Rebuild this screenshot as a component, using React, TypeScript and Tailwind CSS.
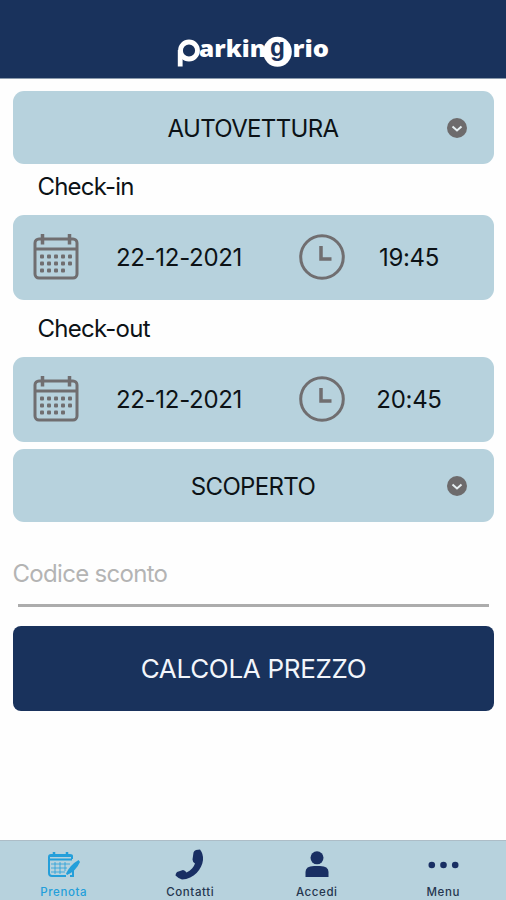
import type { ReactNode } from "react";

function Logo() {
  return (
    <svg
      width="156"
      height="38"
      viewBox="0 0 156 38"
      fill="#fff"
      fontFamily="'Open Sans', sans-serif"
      fontWeight="800"
      fontSize="22.500"
    >
      <path d="M5.200 17V33.500" stroke="#fff" strokeWidth="4.800" />
      <circle cx="14" cy="17.500" r="8.500" fill="none" stroke="#fff" strokeWidth="4.800" />
      <text x="24" y="24" textLength="67" lengthAdjust="spacingAndGlyphs">
        arkin
      </text>
      <ellipse cx="102.500" cy="18.800" rx="14.300" ry="15" />
      <text x="95" y="23" fill="#19325c" fontFamily="'Liberation Sans', sans-serif" fontWeight="700" fontSize="25" textLength="15" lengthAdjust="spacingAndGlyphs">
        g
      </text>
      <text x="117.500" y="24" textLength="36.500" lengthAdjust="spacingAndGlyphs">
        rio
      </text>
    </svg>
  );
}

function ChevronBadge() {
  return (
    <svg width="20" height="20" viewBox="0 0 20 20" fill="none">
      <circle cx="10" cy="10" r="10" fill="#6d6b6c" />
      <path d="M5.500 8.500L10 12.500L14.500 8.500" stroke="#e6eff2" strokeWidth="2" />
    </svg>
  );
}

function CalendarIcon() {
  const dots = [
    [8, 22], [15, 22], [22, 22], [29, 22], [36, 22],
    [8, 29], [15, 29], [22, 29], [29, 29], [36, 29],
    [8, 36], [15, 36], [22, 36], [29, 36],
  ];
  return (
    <svg width="46" height="46" viewBox="0 0 46 46" fill="none" stroke="#706e70" strokeWidth="3">
      <rect x="2" y="5" width="42" height="39" rx="4" />
      <path d="M2 15H44" />
      <path d="M9.500 0V10.500M36.500 0V10.500" strokeWidth="3.500" />
      {dots.map(([x, y]) => (
        <rect key={`${x}-${y}`} x={x - 1} y={y - 1.5} width="4" height="4" rx="1" fill="#706e70" stroke="none" />
      ))}
    </svg>
  );
}

function ClockIcon() {
  return (
    <svg width="46" height="46" viewBox="0 0 46 46" fill="none" stroke="#706e70" strokeWidth="3">
      <circle cx="23" cy="23" r="21.300" />
      <path d="M22 12V25H32.500" strokeWidth="3.500" />
    </svg>
  );
}

function BookIcon() {
  return (
    <svg width="32" height="26" viewBox="0 0 32 26" fill="none" stroke="#249fda" strokeWidth="2">
      <path d="M24 7V4Q24 3 22 3H3Q1 3 1 5V21Q1 24 4 24H18" />
      <path d="M1 7.500H24M2 4H23" strokeWidth="2" />
      <path d="M6 0V5M19 0V5" strokeWidth="2.500" />
      <path d="M3 12H22M3 16H19M3 20H17M7 10V22M12 10V22M17 10V19" strokeWidth=".8" />
      <path d="M22 24H25V18" />
      <path d="M30.500 8L32 10Q28 19 19 23L18 21.500Q22 13 30.500 8Z" fill="#249fda" stroke="none" />
    </svg>
  );
}

function PhoneIcon() {
  return (
    <svg width="30" height="31" viewBox="0 0 30 31" fill="#192f63">
      <path d="M21 1L25 0.500Q28.500 5 28 11C27 20 19 30 7 30.500Q4 30 .5 26.500Q.5 24.500 2 23L8 21Q10 21 11.500 23.500C16 21.500 19 18 20 14.500Q17.500 13 17.500 10.500L18.500 3.500Q19 1.500 21 1Z" />
    </svg>
  );
}

function UserIcon() {
  return (
    <svg width="24" height="27" viewBox="0 0 24 27" fill="#192f63">
      <circle cx="12" cy="6.800" r="6.500" />
      <path d="M.5 26V21Q.5 15 9 15H15Q23.500 15 23.500 21V26Z" />
    </svg>
  );
}

function DotsIcon() {
  return (
    <svg width="31" height="8" viewBox="0 0 31 8" fill="#192f63">
      <circle cx="3.800" cy="4" r="3.300" />
      <circle cx="15.500" cy="4" r="3.300" />
      <circle cx="27.200" cy="4" r="3.300" />
    </svg>
  );
}

function Select({ children }: { children: ReactNode }) {
  return (
    <button type="button" className="grid h-[73px] w-full grid-cols-[54px_1fr_54px] items-center rounded-[11px] bg-[#b7d2dd] pr-[1px]">
      <span className="col-start-2 pt-[2px] pl-[1px] tracking-[-0.65px]">{children}</span>
      <span className="pl-[8px]">
        <ChevronBadge />
      </span>
    </button>
  );
}

function DateTimeRow({ date, time }: { date: string; time: string }) {
  return (
    <div className="flex h-[85px] items-center rounded-[11px] bg-[#b7d2dd] pl-[20px]">
      <span className="pb-[1px]">
        <CalendarIcon />
      </span>
      <span className="w-[200px] pt-[1px] pl-[1px] text-center tracking-[-0.3px]">{date}</span>
      <span className="ml-[20px] pb-[1px]">
        <ClockIcon />
      </span>
      <span className="w-[129px] pt-[1px] text-center tracking-[-0.3px]">{time}</span>
    </div>
  );
}

function Tab({ label, active, children }: { label: string; active?: boolean; children: ReactNode }) {
  return (
    <button type="button" className="flex flex-col items-center pt-[7px] pl-[1px]">
      <span className="flex h-[33px] items-center justify-center">{children}</span>
      <span className={`mt-[4px] text-[11.5px] leading-[14px] font-medium tracking-[0.6px] ${active ? "text-[#249fda]" : "text-[#25364f]"}`}>
        {label}
      </span>
    </button>
  );
}

export default function App() {
  return (
    <div className="flex h-[900px] w-[506px] flex-col bg-[#fefefe] font-['Inter',sans-serif] text-[24px] leading-[30px] text-[#0c1216]">
      <header className="flex h-[79px] justify-center border-b border-[#8b9bad] bg-[#19325c] pt-[33px]">
        <Logo />
      </header>
      <main className="flex-1 px-[12.5px] pt-[12px]">
        <Select>AUTOVETTURA</Select>
        <h2 className="h-[50.5px] pt-[8px] pl-[25px] tracking-[-0.8px]">Check-in</h2>
        <DateTimeRow date="22-12-2021" time="19:45" />
        <h2 className="h-[57px] pt-[14px] pl-[25px] tracking-[-0.75px]">Check-out</h2>
        <DateTimeRow date="22-12-2021" time="20:45" />
        <div className="mt-[7.5px]">
          <Select>SCOPERTO</Select>
        </div>
        <input
          placeholder="Codice sconto"
          className="mt-[35px] block h-[32px] w-full text-[24px] tracking-[-0.7px] outline-none placeholder:text-[#b4b4b4]"
        />
        <div className="mx-[5px] mt-[14.5px] h-[3px] bg-[#acacac]" />
        <button type="button" className="mt-[19.5px] h-[85px] w-full rounded-[8px] bg-[#19325c] pl-[1px] text-[26px] tracking-[-0.3px] text-[#f3f6fb]">
          CALCOLA PREZZO
        </button>
      </main>
      <nav className="grid h-[60px] grid-cols-4 border-t border-[#adbdc7] bg-[#b7d2dd]">
        <Tab label="Prenota" active>
          <BookIcon />
        </Tab>
        <Tab label="Contatti">
          <PhoneIcon />
        </Tab>
        <Tab label="Accedi">
          <UserIcon />
        </Tab>
        <Tab label="Menu">
          <DotsIcon />
        </Tab>
      </nav>
    </div>
  );
}
